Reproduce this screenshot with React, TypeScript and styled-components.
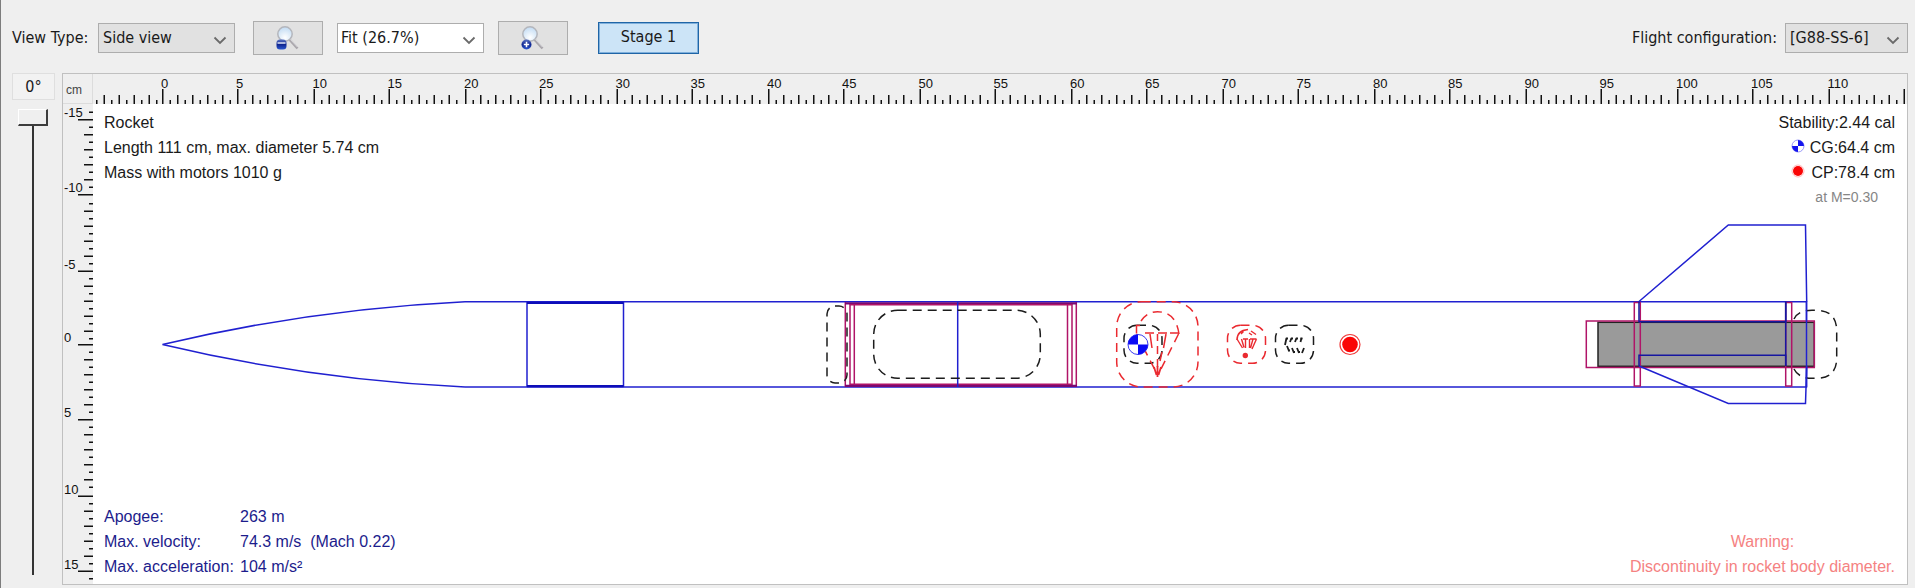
import React, { useLayoutEffect, useRef, useState } from "react";
import styled, { createGlobalStyle } from "styled-components";

const UI_FONT = '"DejaVu Sans Condensed", "DejaVu Sans", sans-serif';
const DRAW_FONT = '"Liberation Sans", Arial, sans-serif';

const GlobalStyle = createGlobalStyle`
  *, *::before, *::after { box-sizing: border-box; }
  body { margin: 0; background: #efefef; }
`;

/* ---------- page ---------- */

const Page = styled.main`
  display: flex;
  flex-direction: column;
  min-height: 100vh;
  padding: 0 7px 3px 11px;
  border-left: 1px solid #7d7d7d;
  background: #efefef;
  color: #1a1a1a;
  font: 16px/20px ${UI_FONT};
`;

const Toolbar = styled.header`
  display: flex;
  align-items: center;
  justify-content: space-between;
  padding: 21px 0 18px;
`;

const ToolGroup = styled.div<{ $gap: number }>`
  display: flex;
  align-items: center;
  gap: ${(p) => p.$gap}px;
`;

const Label = styled.label`
  min-width: 78px;
  white-space: nowrap;
`;

const SelectBox = styled.div<{ $width: number }>`
  display: grid;
  align-items: center;
  width: ${(p) => p.$width}px;
  > * { grid-area: 1 / 1; }
  > svg { justify-self: end; margin: 4px 8px 0 0; pointer-events: none; }
`;

const Select = styled.select<{ $light?: boolean }>`
  appearance: none;
  width: 100%;
  height: 30px;
  padding: 0 24px 0 ${(p) => (p.$light ? 3 : 4)}px;
  border: 1px solid #adadad;
  border-radius: 0;
  background: ${(p) => (p.$light ? "#fff" : "#e1e1e1")};
  color: inherit;
  font: inherit;
`;

const ZoomButton = styled.button`
  display: flex;
  align-items: center;
  justify-content: center;
  width: 70px;
  height: 34px;
  padding: 0;
  border: 1px solid #adadad;
  background: #e1e1e1;
`;

const StageButton = styled.button`
  width: 101px;
  height: 32px;
  margin-left: 16px;
  padding: 0 0 2px;
  border: 1px solid #1f65a6;
  outline: 1px solid #7fb0dc;
  outline-offset: -2px;
  background: #cce4f7;
  color: inherit;
  font: inherit;
`;

const Workspace = styled.div`
  display: grid;
  grid-template-columns: 43px minmax(0, 1fr);
  gap: 7px;
  flex: 1;
`;

/* ---------- roll angle ---------- */

const RollPanel = styled.div`
  display: flex;
  flex-direction: column;
  align-items: center;
  gap: 9px;
  padding-bottom: 10px;
`;

const Angle = styled.output`
  width: 100%;
  height: 27px;
  border: 1px solid #dfdfdf;
  background: #f2f2f2;
  line-height: 26px;
  text-align: center;
`;

const RollSlider = styled.input`
  appearance: none;
  writing-mode: vertical-lr;
  flex: 1;
  width: 30px;
  margin: 0 2px 0 0;
  background: transparent;
  &::-webkit-slider-runnable-track {
    width: 2px;
    height: 100%;
    background: #333;
  }
  &::-webkit-slider-thumb {
    appearance: none;
    width: 30px;
    height: 17px;
    margin-left: -14px;
    border: solid;
    border-width: 1px 2px 2px 1px;
    border-color: #fff #3c3c3c #3c3c3c #fff;
    background: #efefef;
  }
`;

/* ---------- canvas ---------- */

const Canvas = styled.section`
  display: grid;
  grid-template-columns: 30px minmax(0, 1fr);
  grid-template-rows: 30px minmax(480px, 1fr);
  border: 1px solid #c0c0c0;
`;

const Unit = styled.div`
  border: solid #dcdcdc;
  border-width: 0 1px 1px 0;
  padding: 2px 0 0 3px;
  color: #444;
  font: 12px/28px ${DRAW_FONT};
`;

const RulerCell = styled.div`
  contain: size;
  overflow: hidden;
  > svg {
    display: block;
    width: 100%;
    height: 100%;
    font: 13px ${DRAW_FONT};
    fill: #111;
  }
`;

const Sheet = styled.div`
  display: grid;
  grid-template-columns: 1fr auto;
  grid-template-rows: 1fr auto;
  overflow: hidden;
  background: #fff;
  color: #1a1a1a;
  font: 16px/25px ${DRAW_FONT};
  > p, > div, > dl { z-index: 1; margin: 0; }
`;

const Drawing = styled.svg`
  grid-area: 1 / 1 / 3 / 3;
  display: block;
  width: 100%;
  height: 480px;
  fill: none;
`;

const Summary = styled.p`
  grid-area: 1 / 1;
  padding: 6px 0 0 11px;
`;

const Stability = styled.div`
  grid-area: 1 / 2;
  display: flex;
  flex-direction: column;
  align-items: flex-end;
  padding: 6px 12px 0 0;
`;

const Marker = styled.span`
  display: flex;
  align-items: center;
  justify-content: space-between;
  width: 104px;
  > svg { margin-bottom: 3px; }
`;

const Mach = styled.small`
  padding-right: 17px;
  color: #868686;
  font-size: 14px;
`;

const FlightData = styled.dl`
  grid-area: 2 / 1;
  display: grid;
  grid-template-columns: 136px auto;
  justify-content: start;
  padding: 0 0 5px 11px;
  color: #1c1c8c;
  dd { margin: 0; white-space: pre; }
`;

const Warning = styled.p`
  grid-area: 2 / 2;
  align-self: end;
  padding: 0 12px 5px 0;
  color: #f58282;
  text-align: center;
`;

/* ---------- icons ---------- */

const Chevron = () => (
  <svg width="14" height="9" viewBox="0 0 14 9" aria-hidden="true">
    <path d="M1.5 1.5 7 7l5.5-5.5" fill="none" stroke="#6a6a6a" strokeWidth="1.8" />
  </svg>
);

const Magnifier = ({ plus = false }: { plus?: boolean }) => {
  const id = plus ? "in" : "out";
  return (
    <svg width="24" height="25" viewBox="0 0 24 25" aria-hidden="true">
      <defs>
        <radialGradient id={`lens-${id}`} cx="0.5" cy="0.75" r="0.8">
          <stop offset="0" stopColor="#fff" />
          <stop offset="1" stopColor="#bcd8f2" />
        </radialGradient>
        <linearGradient id={`badge-${id}`} x1="0" y1="0" x2="0" y2="1">
          <stop offset="0" stopColor="#5b74c4" />
          <stop offset="0.5" stopColor="#0f2590" />
          <stop offset="1" stopColor="#2d59cf" />
        </linearGradient>
      </defs>
      <path d="M13 13l8.500 9.500" stroke="#aaa7ac" strokeWidth="2.600" />
      <path d="M13.500 12.500l8 8.500" stroke="#dcdce0" strokeWidth="1" />
      <circle cx="9" cy="8" r="7.200" fill={`url(#lens-${id})`} stroke="#b4b6bc" strokeWidth="1.500" />
      {plus ? (
        <>
          <circle cx="5.500" cy="18.500" r="5" fill={`url(#badge-${id})`} />
          <path d="M2.800 18.500h5.400M5.500 15.800v5.400" stroke="#fff" strokeWidth="1.600" />
        </>
      ) : (
        <>
          <rect x="0.500" y="13.500" width="10" height="10" rx="3.500" fill={`url(#badge-${id})`} />
          <path d="M1.500 17h8" stroke="#e8edfa" strokeWidth="1.400" />
        </>
      )}
    </svg>
  );
};

const CgMark = ({ cx, cy, r }: { cx: number; cy: number; r: number }) => (
  <g transform={`translate(${cx} ${cy})`}>
    <circle r={r} fill="#fff" stroke="#3c3cf0" strokeWidth="1" />
    <path d={`M0 0V${-r}A${r} ${r} 0 0 0 ${-r} 0ZM0 0V${r}A${r} ${r} 0 0 0 ${r} 0Z`} fill="#0a0af5" />
  </g>
);

const CgBadge = () => (
  <svg width="14" height="14" viewBox="0 0 14 14" aria-hidden="true">
    <circle cx="7" cy="7" r="6" fill="#fff" stroke="#9a9af8" />
    <path d="M7 7V1A6 6 0 0 1 13 7ZM7 7V13A6 6 0 0 1 1 7Z" fill="#1414ee" />
  </svg>
);

const CpBadge = () => (
  <svg width="14" height="14" viewBox="0 0 14 14" aria-hidden="true">
    <circle cx="7" cy="7" r="6" fill="#fff" stroke="#fbb" />
    <circle cx="7" cy="7" r="5" fill="#fa0505" />
  </svg>
);

/* ---------- rulers ---------- */

// The view is laid out in device units of 1.5px, with 10.1 of them to a centimetre.
const UNIT = 1.5;
const UNITS_PER_CM = 10.1;
const PX_PER_CM = UNIT * UNITS_PER_CM;
const rulerOffset = (cm: number) =>
  (Math.trunc(cm * UNITS_PER_CM + (cm < 0 ? -0.001 : 0.001)) + (cm < 0 ? 1 : 0)) * UNIT;

const tickLength = (cm: number) => (cm % 5 === 0 ? 15 : cm % 1 === 0 ? 9 : 4);

const Ruler = ({ axis, zero }: { axis: "x" | "y"; zero: number }) => {
  const cell = useRef<HTMLDivElement>(null);
  const [size, setSize] = useState(0);

  useLayoutEffect(() => {
    const node = cell.current!;
    const measure = () => setSize(axis === "x" ? node.clientWidth : node.clientHeight);
    const observer = new ResizeObserver(measure);
    measure();
    observer.observe(node);
    return () => observer.disconnect();
  }, [axis]);

  const first = -Math.ceil(zero / PX_PER_CM);
  const count = Math.max(0, Math.ceil((size / PX_PER_CM) * 2) + 2);
  const marks = Array.from({ length: count }, (_, i) => first + i / 2)
    .map((cm) => ({ cm, at: zero + rulerOffset(cm), len: tickLength(cm) }))
    .filter(({ at }) => at > 1 && at < size - 1);

  return (
    <RulerCell ref={cell}>
      <svg aria-hidden="true">
        {marks.map(({ cm, at, len }) =>
          axis === "x" ? (
            <g key={cm}>
              <rect x={at} y={30 - len} width="1.5" height={len} />
              {cm % 5 === 0 && at < size - 24 && <text x={at - 1} y="14">{cm}</text>}
            </g>
          ) : (
            <g key={cm}>
              <rect x={30 - len} y={at} width={len} height="1.5" />
              {cm % 5 === 0 && at > 13 && <text x="1" y={at - 2}>{cm}</text>}
            </g>
          ),
        )}
      </svg>
    </RulerCell>
  );
};

/* ---------- rocket ---------- */

const BLUE = "#2020d0";
const MAGENTA = "#b01468";
const RED = "#ea2a30";
const DASH = "9 6";

const Rocket = () => (
  <Drawing role="img" aria-label="Rocket, side view">
    <g transform="translate(-93 -104)" strokeWidth="1.500">
      {/* nose cone, shoulder and body tubes */}
      <g stroke={BLUE}>
        <path d="M465 301.700Q312 309 162.500 344.500Q312 380 465 387" />
        <path d="M465 301.700H1806.500V387H465" />
        <path d="M527 302V387M623.500 302V387" />
        <path d="M527 302.800H623.500M527 386.200H623.500" stroke="#0d0db8" strokeWidth="2.200" />
      </g>

      {/* coupler with bulkheads */}
      <g stroke={MAGENTA}>
        <path d="M845.300 302V387M850 304V386M854.300 304V386M1067.500 304V386M1072 304V386M1076.300 302V387" />
        <path d="M845 303.300H1077M845 385.800H1077" stroke="#7a0a70" strokeWidth="2.200" />
        <path d="M850 304.800H1072M850 384.300H1072" />
      </g>
      <path d="M957.700 302V387" stroke={BLUE} />

      {/* mass components */}
      <g stroke="#1c1c1c" strokeDasharray={DASH}>
        <rect x="827" y="306" width="20" height="77" rx="8" />
        <rect x="873.700" y="310.300" width="166.600" height="68" rx="24" />
        <rect x="1124" y="325.300" width="38" height="38" rx="13" />
        <rect x="1275.500" y="325.300" width="38" height="38" rx="13" />
        <path d="M1794 319Q1798 310.300 1812 310.300H1816Q1836.700 310.300 1836.700 331V358Q1836.700 378.300 1816 378.300H1812Q1798 378.300 1793.500 368" />
      </g>
      <g stroke="#1c1c1c" strokeWidth="1.800">
        <path d="M1285 345l1.500-7M1290 342l1.500-4M1295 342l1.500-4M1300.500 342l1-4M1287 346l2 5M1292 348l2 5M1297 348l2 5M1304 348l-2 5" />
        <path d="M1286 338.500h2M1291 338.500h2M1296 338.500h2M1300.500 338.500h2M1288 350.500h2M1293 352h2M1298 352h2" />
      </g>

      {/* parachutes */}
      <g stroke={RED}>
        <g strokeDasharray={DASH}>
          <rect x="1116.700" y="301.700" width="81.300" height="85.300" rx="25" />
          <rect x="1227.500" y="325.300" width="38" height="38" rx="13" />
          <path d="M1141 321Q1147 311.700 1157.500 311.700Q1176 312 1179 334" />
          <path d="M1178.500 334L1159.500 372M1136.500 334L1156 372" />
        </g>
        <path d="M1140 325.500h-3.500v8M1145 333h9M1158 333h9M1170 333h9" />
        <path d="M1157.500 334v7M1157.500 346v8M1157.500 359v8M1166 334l-2.500 14M1162 352l-2 9M1150 334l2 14" />
        <path d="M1154 367l2.500 8M1157.500 366v11M1161 367l-2.500 8" strokeWidth="1.800" />
      </g>
      <g stroke={RED} strokeWidth="1.400">
        <path d="M1237 340q0-9.500 11-10.500M1251 331l5 3.500M1241 334l2.500-2.500M1249 333l3 2" />
        <path d="M1237 339l5.500 9M1243 339h5M1250 339h6.500M1241.500 339l2.500 8.500M1245.500 339v9M1249.500 339v9M1253 339l-2.500 9M1256.500 339l-4.500 10" />
        <circle cx="1245.300" cy="355.500" r="2" fill={RED} />
      </g>

      {/* motor in its mount */}
      <rect x="1598" y="322.300" width="216.300" height="44" fill="#9a9a9a" stroke="#222" />
      <g stroke={MAGENTA}>
        <rect x="1586.300" y="321" width="228" height="46.500" />
        <rect x="1634.300" y="302.500" width="6" height="83.500" />
        <rect x="1785.700" y="302.500" width="6" height="83.500" />
      </g>

      {/* fins with their tabs */}
      <g stroke={BLUE}>
        <path d="M1639 301.500L1728.300 225H1805.500L1806.700 301.500" />
        <path d="M1639 366L1728.300 403.500H1805.500L1806.700 366" />
        <path d="M1806.500 301V387" />
        <path d="M1639 301.500V321.700H1785.700V301.500M1639 366V355.300H1785.700V366" stroke="#1616a0" />
        <path d="M1785.700 302V366" stroke="#1616a0" />
      </g>

      {/* centre of gravity and centre of pressure */}
      <CgMark cx={1138} cy={344.500} r={10} />
      <circle cx="1350" cy="344.500" r="10" fill="#fff" stroke="#f03c3c" strokeWidth="1.200" />
      <circle cx="1350" cy="344.500" r="7.800" fill="#fa0505" />
    </g>
  </Drawing>
);

export default function App() {
  const [roll, setRoll] = useState(0);

  return (
    <>
      <GlobalStyle />
      <Page>
        <Toolbar>
          <ToolGroup $gap={14}>
            <ToolGroup $gap={8}>
              <Label htmlFor="view">View Type:</Label>
              <SelectBox $width={137}>
                <Select id="view" defaultValue="Side view">
                  <option>Side view</option>
                  <option>Back view</option>
                </Select>
                <Chevron />
              </SelectBox>
            </ToolGroup>
            <ToolGroup $gap={14}>
              <ZoomOutSlot>
                <ZoomButton type="button" aria-label="Zoom out"><Magnifier /></ZoomButton>
              </ZoomOutSlot>
              <SelectBox $width={147}>
                <Select $light aria-label="Zoom level" defaultValue="Fit (26.7%)">
                  <option>Fit (26.7%)</option>
                  <option>50%</option>
                  <option>100%</option>
                </Select>
                <Chevron />
              </SelectBox>
              <ZoomButton type="button" aria-label="Zoom in"><Magnifier plus /></ZoomButton>
            </ToolGroup>
            <StageButton type="button" aria-pressed="true">Stage 1</StageButton>
          </ToolGroup>
          <ToolGroup $gap={8}>
            <Label htmlFor="config">Flight configuration:</Label>
            <SelectBox $width={123}>
              <Select id="config" defaultValue="[G88-SS-6]">
                <option>[G88-SS-6]</option>
              </Select>
              <Chevron />
            </SelectBox>
          </ToolGroup>
        </Toolbar>

        <Workspace>
          <RollPanel>
            <Angle htmlFor="roll">{roll}°</Angle>
            <RollSlider
              id="roll"
              type="range"
              min={0}
              max={360}
              value={roll}
              aria-label="Roll angle"
              onChange={(e) => setRoll(Number(e.target.value))}
            />
          </RollPanel>

          <Canvas>
            <Unit>cm</Unit>
            <Ruler axis="x" zero={69} />
            <Ruler axis="y" zero={240} />
            <Sheet>
              <Rocket />
              <Summary>
                Rocket<br />
                Length 111 cm, max. diameter 5.74 cm<br />
                Mass with motors 1010 g
              </Summary>
              <Stability>
                <span>Stability:2.44 cal</span>
                <Marker><CgBadge />CG:64.4 cm</Marker>
                <Marker><CpBadge />CP:78.4 cm</Marker>
                <Mach>at M=0.30</Mach>
              </Stability>
              <FlightData>
                <dt>Apogee:</dt>
                <dd>263 m</dd>
                <dt>Max. velocity:</dt>
                <dd>{"74.3 m/s  (Mach 0.22)"}</dd>
                <dt>Max. acceleration:</dt>
                <dd>104 m/s²</dd>
              </FlightData>
              <Warning>
                Warning:<br />
                Discontinuity in rocket body diameter.
              </Warning>
            </Sheet>
          </Canvas>
        </Workspace>
      </Page>
    </>
  );
}

const ZoomOutSlot = styled.div`
  padding-left: 4px;
`;
